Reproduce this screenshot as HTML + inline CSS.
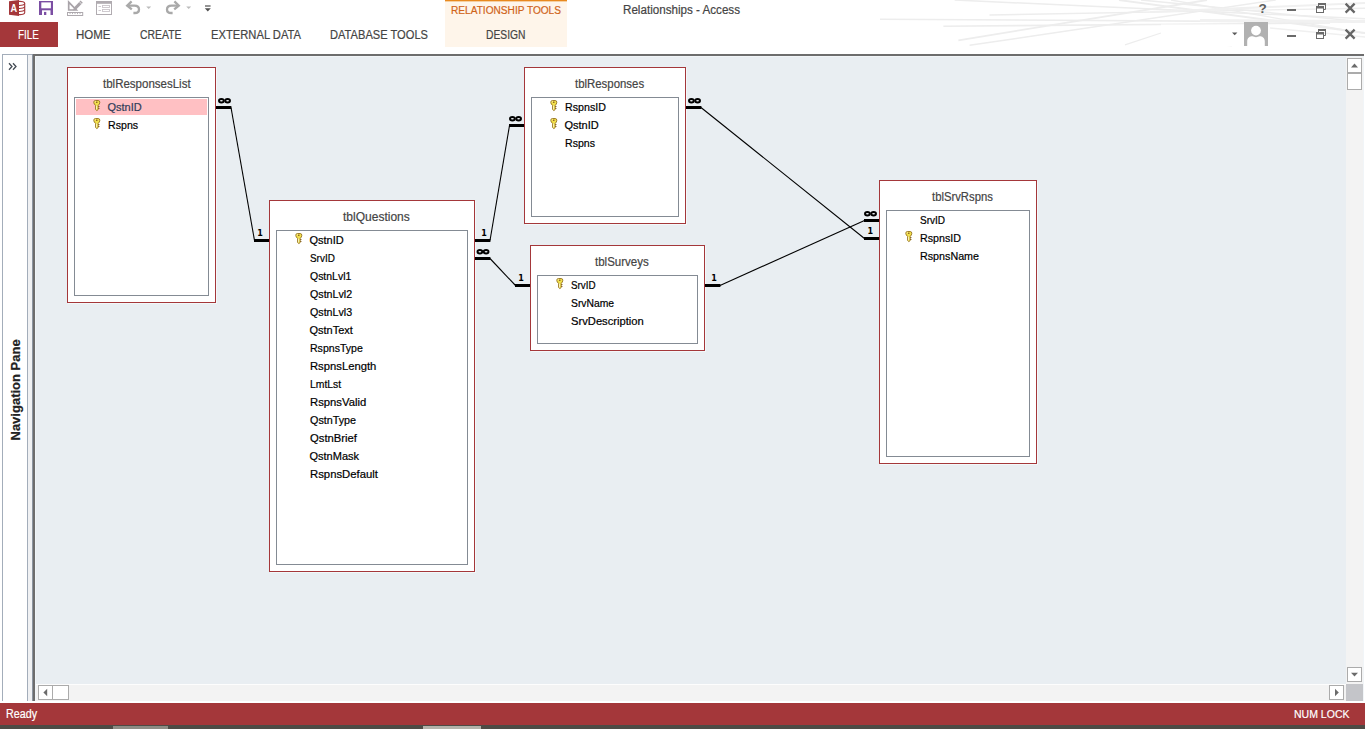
<!DOCTYPE html>
<html lang="en"><head><meta charset="utf-8"><title>Relationships - Access</title>
<style>
html,body{margin:0;padding:0}
body{width:1365px;height:729px;position:relative;overflow:hidden;background:#fff;font-family:'Liberation Sans',sans-serif}
div,span,svg{position:absolute;box-sizing:content-box}
.t{white-space:pre;line-height:20px;height:20px;transform-origin:0 50%;-webkit-text-stroke:.2px currentColor}
.tb{background:#fff;border:1px solid #a4373a;box-shadow:1px 1px 0 #f3f8fa}
.in{background:#fff;border:1px solid #848b94}
.sel{background:#ffc0c3}
.k{overflow:visible}
.sb{background:#fff;border:1px solid #ababab}
</style></head><body>
<!-- title bar / ribbon -->
<div style="left:445px;top:0;width:122px;height:47px;background:#fef5ea"></div>
<div style="left:445px;top:0;width:122px;height:1px;background:#e8891f"></div>
<div style="left:445px;top:1px;width:122px;height:1px;background:#f6cfa0"></div>
<svg class="abs" style="left:0;top:0" width="1365" height="54" viewBox="0 0 1365 54" fill="none">
<g stroke="#ededed">
<line x1="880" y1="19.200" x2="1365" y2="22.200" stroke-width="1.600"/>
<line x1="943.400" y1="26.200" x2="1330" y2="23" stroke-width="1.600"/>
<line x1="989.500" y1="15" x2="1365" y2="8.200" stroke-width="1.400"/>
<line x1="958.400" y1="40.300" x2="1207" y2="0" stroke-width="1.800"/>
<line x1="969.600" y1="45.300" x2="1275.700" y2="0" stroke-width="1.500"/>
<line x1="954.600" y1="0" x2="1365" y2="18.700" stroke-width="1.500"/>
<line x1="1125" y1="44.800" x2="1161" y2="33" stroke-width="1.300"/>
<line x1="1119" y1="0" x2="1365" y2="33" stroke-width="1.800"/>
<line x1="1141" y1="0" x2="1365" y2="22" stroke-width="1.500"/>
<line x1="1171" y1="0" x2="1365" y2="33.400" stroke-width="1.300"/>
<line x1="1150" y1="12" x2="1365" y2="3" stroke-width="2.200" stroke="#f0f0f0"/>
<line x1="1200" y1="20.500" x2="1365" y2="21.500" stroke-width="3" stroke="#f1f1f1"/>
<line x1="1197" y1="41" x2="1232" y2="46" stroke-width="1.300"/>
<line x1="1270" y1="28" x2="1365" y2="37" stroke-width="1.300" stroke="#f0f0f0"/>
</g>
<rect x="1161" y="24.500" width="83" height="22" fill="#fff"/>
</svg>
<div style="left:0;top:22px;width:58px;height:25px;background:#a4373a"></div>
<svg class="abs" style="left:0;top:0" width="230" height="18" viewBox="0 0 230 18">
<!-- access logo -->
<g fill="none" stroke="#a4373a" stroke-width="1.100">
<path d="M18.5 1.400 C22 1.100 24.700 1.900 24.700 3.300 V12.700 C24.700 14.100 22 14.900 18.5 14.600" fill="#fff"/>
<path d="M18.5 5.400 C22 5.600 24.700 4.700 24.700 3.400 M18.5 8.400 C22 8.600 24.700 7.700 24.700 6.400 M18.5 11.400 C22 11.600 24.700 10.700 24.700 9.400"/>
</g>
<path d="M9 1.200 L19 0 L19 15.900 L9 14.700 Z" fill="#a4373a"/>
<text x="13.9" y="12.100" text-anchor="middle" font-family="Liberation Sans,sans-serif" font-weight="700" font-size="11.5" fill="#fff" transform="translate(13.9 0) scale(.8 1) translate(-13.9 0)">A</text>
<!-- save -->
<path d="M39 1 H53 V15 H39 Z" fill="#7b4ea3"/>
<rect x="41.3" y="2.4" width="9.6" height="5.9" fill="#fff"/>
<rect x="42" y="10.3" width="8.5" height="4.7" fill="#fff"/>
<rect x="44" y="11.9" width="2.3" height="3.1" fill="#7b4ea3"/>
<!-- design view -->
<g fill="none" stroke="#a9a4a9" stroke-width="1.7" stroke-linejoin="miter">
<path d="M68.7 2.2 L68.7 10 L76.3 10 Z"/>
</g>
<rect x="67.5" y="12.5" width="15.2" height="3" fill="#fff" stroke="#aea9ae" stroke-width="1"/>
<path d="M73.2 10.4 L74 7.4 L80.6 .6 L82.8 2.8 L76.2 9.6 Z" fill="#a9a4a9"/>
<path d="M79.4 1.8 L81.6 4" stroke="#fff" stroke-width=".7"/>
<g stroke="#aea9ae" stroke-width=".9"><path d="M70 12.6v1.5M72.5 12.6v1.5M75 12.6v1.5M77.500 12.6v1.5M80 12.6v1.5"/></g>
<!-- form -->
<rect x="96.5" y="1.5" width="15" height="13" fill="#fff" stroke="#b0abb0"/>
<rect x="96" y="1" width="16" height="2.800" fill="#b0abb0"/>
<g fill="none" stroke="#cbc5cb" stroke-width=".9"><rect x="102.5" y="5.500" width="7" height="2"/><rect x="102.5" y="9.500" width="7" height="2"/><path d="M98.5 6.500h2.500M98.5 10.500h2.500"/></g>
<!-- undo / redo -->
<g fill="none" stroke="#a9a9a9" stroke-width="2.300" stroke-linecap="butt" stroke-linejoin="miter">
<path d="M131.6 1.400 L127.2 5.600 L131.800 9.400"/><path d="M128 5.600 H134.400 C137.800 5.600 139 7.700 139 9.400 C139 11.500 137.400 13 134.800 13 H133.400"/>
<path d="M174.400 1.400 L178.800 5.600 L174.200 9.400"/><path d="M178 5.600 H171.600 C168.200 5.600 167 7.700 167 9.400 C167 11.500 168.600 13 171.200 13 H172.600"/>
</g>
<path d="M146.200 6.400h5l-2.500 2.600z M186.200 6.400h5l-2.500 2.600z" fill="#bcbcbc"/>
<!-- qat customize -->
<rect x="205" y="5.400" width="5.600" height="1.200" fill="#505050"/>
<path d="M204.800 8.200h6l-3 3.300z" fill="#505050"/>
</svg>
<svg class="abs" style="left:1225px;top:0" width="140" height="50" viewBox="0 0 140 50">
<text x="37.5" y="13" text-anchor="middle" font-family="Liberation Sans,sans-serif" font-weight="700" font-size="13.5" fill="#5c5c5c">?</text>
<g fill="#6a6a6a"><rect x="62" y="9" width="9" height="2"/><rect x="62" y="35" width="9" height="2"/></g>
<g fill="none" stroke="#6a6a6a" stroke-width="1">
<path d="M93.5 6 V3.500 H100.5 V9.5 H98.5"/><path d="M93 4h8" stroke-width="2"/>
<rect x="91.5" y="6.500" width="7" height="6" fill="#fff"/><path d="M91 7.5h8" stroke-width="2"/>
<path d="M93.5 32 V29.5 H100.5 V35.5 H98.5"/><path d="M93 30h8" stroke-width="2"/>
<rect x="91.5" y="32.5" width="7" height="6" fill="#fff"/><path d="M91 33.5h8" stroke-width="2"/>
</g>
<g stroke="#666" stroke-width="2.3" stroke-linecap="butt"><path d="M120.6 3.600 L129.6 12.6 M129.6 3.600 L120.6 12.6 M120.6 29.6 L129.6 38.6 M129.6 29.6 L120.6 38.6"/></g>
<path d="M7 32.400h5.400l-2.700 2.900z" fill="#5a5a5a"/>
<rect x="19" y="22" width="24" height="24" fill="#b1b1b1"/>
<circle cx="31" cy="30.600" r="4.900" fill="#fff"/>
<path d="M22.200 46 V41.500 C22.200 37.600 25 36.300 27.500 36.300 C29.500 37.400 32.500 37.400 34.500 36.300 C37 36.300 39.800 37.600 39.800 41.500 V46 Z" fill="#fff"/>
</svg>
<!-- workspace -->
<div style="left:33px;top:54px;width:1331px;height:647px;background:#6d6d6d"></div>
<div style="left:35px;top:56px;width:1329px;height:645px;background:#f1f5f8"></div>
<div style="left:36px;top:57px;width:1310px;height:627px;background:#e9eef2"></div>
<!-- nav pane -->
<div style="left:2px;top:54px;width:24px;height:647px;background:#fff;border:1px solid #a3adba;border-bottom:none"></div>
<div style="left:28px;top:54px;width:4px;height:647px;background:#f0f1f3;border-top:1px solid #a3adba"></div>
<div style="left:32px;top:54px;width:1px;height:647px;background:#8c95a1"></div>
<svg style="left:8px;top:62px" width="10" height="9" viewBox="0 0 10 9" fill="none" stroke="#444b55" stroke-width="1.3"><path d="M1 1.2 L4 4.5 L1 7.8 M5 1.2 L8 4.5 L5 7.8"/></svg>
<span class="t" style="left:-35.5px;top:379.5px;width:101px;text-align:center;font-size:13px;font-weight:700;color:#222;transform:rotate(-90deg);transform-origin:50% 50%">Navigation Pane</span>
<!-- scrollbars -->
<div style="left:1346px;top:57px;width:17px;height:627px;background:#f3f3f3"></div>
<div style="left:36px;top:684px;width:1310px;height:1px;background:#fdfdfd"></div>
<div style="left:36px;top:685px;width:1310px;height:16px;background:#f3f3f3"></div>
<div style="left:1346px;top:684px;width:17px;height:17px;background:#c4c5c9"></div>
<div class="sb" style="left:1347px;top:58px;width:13px;height:13px"></div>
<div class="sb" style="left:1347px;top:73px;width:13px;height:15px"></div>
<div class="sb" style="left:1347px;top:667px;width:13px;height:13px"></div>
<div class="sb" style="left:38px;top:685px;width:13px;height:13px"></div>
<div class="sb" style="left:52px;top:685px;width:15px;height:13px"></div>
<div class="sb" style="left:1329px;top:685px;width:13px;height:13px"></div>
<svg style="left:1347px;top:58px" width="16" height="16" viewBox="0 0 16 16"><path d="M4 9.4h7L7.5 5.4z" fill="#6b6b6b"/></svg>
<svg style="left:1347px;top:667px" width="16" height="16" viewBox="0 0 16 16"><path d="M4 5.8h7L7.5 9.6z" fill="#6b6b6b"/></svg>
<svg style="left:38px;top:685px" width="16" height="16" viewBox="0 0 16 16"><path d="M9.2 3.8v7.4L5.4 7.5z" fill="#6b6b6b"/></svg>
<svg style="left:1329px;top:685px" width="16" height="16" viewBox="0 0 16 16"><path d="M6 3.8v7.4L9.8 7.5z" fill="#6b6b6b"/></svg>
<!-- tables -->
<div class="tb" style="left:67px;top:67px;width:147px;height:234px"></div><div class="in" style="left:74px;top:97px;width:133px;height:197px"></div><div class="sel" style="left:76px;top:99px;width:131px;height:16px"></div><svg class="k" style="left:92.5px;top:100px" width="8" height="12" viewBox="0 0 8 12"><path d="M.8 2.3 Q.8 .5 2.4 .5 L5.2 .5 Q6.8 .5 6.8 2.3 Q6.8 4.1 5.2 5.4 L5.2 9.5 L3.9 10.6 L2.6 9.5 L2.6 5.4 Q.8 4.1 .8 2.3 Z" fill="#f1e04a" stroke="#94701e" stroke-width=".9" stroke-linejoin="round"/><path d="M5.3 6.1h1.1v1h-1.1z M5.3 7.9h1.1v1h-1.1z" fill="#7a5216"/><circle cx="3.8" cy="2.3" r=".8" fill="#7a4a22"/><path d="M1.7 1.9 L2.5 1.4 M3.6 5.6 L3.6 9.4" stroke="#fffde0" stroke-width=".8"/></svg><svg class="k" style="left:92.5px;top:118px" width="8" height="12" viewBox="0 0 8 12"><path d="M.8 2.3 Q.8 .5 2.4 .5 L5.2 .5 Q6.8 .5 6.8 2.3 Q6.8 4.1 5.2 5.4 L5.2 9.5 L3.9 10.6 L2.6 9.5 L2.6 5.4 Q.8 4.1 .8 2.3 Z" fill="#f1e04a" stroke="#94701e" stroke-width=".9" stroke-linejoin="round"/><path d="M5.3 6.1h1.1v1h-1.1z M5.3 7.9h1.1v1h-1.1z" fill="#7a5216"/><circle cx="3.8" cy="2.3" r=".8" fill="#7a4a22"/><path d="M1.7 1.9 L2.5 1.4 M3.6 5.6 L3.6 9.4" stroke="#fffde0" stroke-width=".8"/></svg><div class="tb" style="left:269px;top:200px;width:204px;height:370px"></div><div class="in" style="left:276px;top:230px;width:190px;height:333px"></div><svg class="k" style="left:294.5px;top:233px" width="8" height="12" viewBox="0 0 8 12"><path d="M.8 2.3 Q.8 .5 2.4 .5 L5.2 .5 Q6.8 .5 6.8 2.3 Q6.8 4.1 5.2 5.4 L5.2 9.5 L3.9 10.6 L2.6 9.5 L2.6 5.4 Q.8 4.1 .8 2.3 Z" fill="#f1e04a" stroke="#94701e" stroke-width=".9" stroke-linejoin="round"/><path d="M5.3 6.1h1.1v1h-1.1z M5.3 7.9h1.1v1h-1.1z" fill="#7a5216"/><circle cx="3.8" cy="2.3" r=".8" fill="#7a4a22"/><path d="M1.7 1.9 L2.5 1.4 M3.6 5.6 L3.6 9.4" stroke="#fffde0" stroke-width=".8"/></svg><div class="tb" style="left:524px;top:67px;width:160px;height:155px"></div><div class="in" style="left:531px;top:97px;width:146px;height:118px"></div><svg class="k" style="left:549.5px;top:100px" width="8" height="12" viewBox="0 0 8 12"><path d="M.8 2.3 Q.8 .5 2.4 .5 L5.2 .5 Q6.8 .5 6.8 2.3 Q6.8 4.1 5.2 5.4 L5.2 9.5 L3.9 10.6 L2.6 9.5 L2.6 5.4 Q.8 4.1 .8 2.3 Z" fill="#f1e04a" stroke="#94701e" stroke-width=".9" stroke-linejoin="round"/><path d="M5.3 6.1h1.1v1h-1.1z M5.3 7.9h1.1v1h-1.1z" fill="#7a5216"/><circle cx="3.8" cy="2.3" r=".8" fill="#7a4a22"/><path d="M1.7 1.9 L2.5 1.4 M3.6 5.6 L3.6 9.4" stroke="#fffde0" stroke-width=".8"/></svg><svg class="k" style="left:549.5px;top:118px" width="8" height="12" viewBox="0 0 8 12"><path d="M.8 2.3 Q.8 .5 2.4 .5 L5.2 .5 Q6.8 .5 6.8 2.3 Q6.8 4.1 5.2 5.4 L5.2 9.5 L3.9 10.6 L2.6 9.5 L2.6 5.4 Q.8 4.1 .8 2.3 Z" fill="#f1e04a" stroke="#94701e" stroke-width=".9" stroke-linejoin="round"/><path d="M5.3 6.1h1.1v1h-1.1z M5.3 7.9h1.1v1h-1.1z" fill="#7a5216"/><circle cx="3.8" cy="2.3" r=".8" fill="#7a4a22"/><path d="M1.7 1.9 L2.5 1.4 M3.6 5.6 L3.6 9.4" stroke="#fffde0" stroke-width=".8"/></svg><div class="tb" style="left:530px;top:245px;width:173px;height:104px"></div><div class="in" style="left:537px;top:275px;width:159px;height:67px"></div><svg class="k" style="left:555.5px;top:278px" width="8" height="12" viewBox="0 0 8 12"><path d="M.8 2.3 Q.8 .5 2.4 .5 L5.2 .5 Q6.8 .5 6.8 2.3 Q6.8 4.1 5.2 5.4 L5.2 9.5 L3.9 10.6 L2.6 9.5 L2.6 5.4 Q.8 4.1 .8 2.3 Z" fill="#f1e04a" stroke="#94701e" stroke-width=".9" stroke-linejoin="round"/><path d="M5.3 6.1h1.1v1h-1.1z M5.3 7.9h1.1v1h-1.1z" fill="#7a5216"/><circle cx="3.8" cy="2.3" r=".8" fill="#7a4a22"/><path d="M1.7 1.9 L2.5 1.4 M3.6 5.6 L3.6 9.4" stroke="#fffde0" stroke-width=".8"/></svg><div class="tb" style="left:879px;top:180px;width:156px;height:282px"></div><div class="in" style="left:886px;top:210px;width:142px;height:245px"></div><svg class="k" style="left:904.5px;top:231px" width="8" height="12" viewBox="0 0 8 12"><path d="M.8 2.3 Q.8 .5 2.4 .5 L5.2 .5 Q6.8 .5 6.8 2.3 Q6.8 4.1 5.2 5.4 L5.2 9.5 L3.9 10.6 L2.6 9.5 L2.6 5.4 Q.8 4.1 .8 2.3 Z" fill="#f1e04a" stroke="#94701e" stroke-width=".9" stroke-linejoin="round"/><path d="M5.3 6.1h1.1v1h-1.1z M5.3 7.9h1.1v1h-1.1z" fill="#7a5216"/><circle cx="3.8" cy="2.3" r=".8" fill="#7a4a22"/><path d="M1.7 1.9 L2.5 1.4 M3.6 5.6 L3.6 9.4" stroke="#fffde0" stroke-width=".8"/></svg>
<svg class="abs" style="left:0;top:0" width="1365" height="729" viewBox="0 0 1365 729"><rect x="216" y="106" width="15.4" height="3"/><rect x="254" y="239" width="15" height="3"/><rect x="475" y="239" width="15.4" height="3"/><rect x="509" y="124" width="15" height="3"/><rect x="475" y="257" width="15.4" height="3"/><rect x="515" y="284" width="15" height="3"/><rect x="705" y="284" width="15.4" height="3"/><rect x="864" y="219" width="15" height="3"/><rect x="686" y="106" width="15.4" height="3"/><rect x="864" y="237" width="15" height="3"/><line x1="231" y1="107.5" x2="254.5" y2="240.5" stroke="#000" stroke-width="1.1"/><line x1="490" y1="240.5" x2="509.5" y2="125.5" stroke="#000" stroke-width="1.1"/><line x1="490" y1="258.5" x2="515.5" y2="285.5" stroke="#000" stroke-width="1.1"/><line x1="720" y1="285.5" x2="864.5" y2="220.5" stroke="#000" stroke-width="1.1"/><line x1="701" y1="107.5" x2="864.5" y2="238.5" stroke="#000" stroke-width="1.1"/><g fill="none" stroke="#000" stroke-width="1.9"><ellipse cx="221.4" cy="100.7" rx="2.4" ry="1.75"/><ellipse cx="227.6" cy="100.7" rx="2.4" ry="1.75"/></g><g fill="none" stroke="#000" stroke-width="1.9"><ellipse cx="512.4" cy="118.7" rx="2.4" ry="1.75"/><ellipse cx="518.6" cy="118.7" rx="2.4" ry="1.75"/></g><g fill="none" stroke="#000" stroke-width="1.9"><ellipse cx="479.9" cy="251.7" rx="2.4" ry="1.75"/><ellipse cx="486.1" cy="251.7" rx="2.4" ry="1.75"/></g><g fill="none" stroke="#000" stroke-width="1.9"><ellipse cx="867.4" cy="213.7" rx="2.4" ry="1.75"/><ellipse cx="873.6" cy="213.7" rx="2.4" ry="1.75"/></g><g fill="none" stroke="#000" stroke-width="1.9"><ellipse cx="691.4" cy="100.7" rx="2.4" ry="1.75"/><ellipse cx="697.6" cy="100.7" rx="2.4" ry="1.75"/></g><text x="260" y="236" text-anchor="middle" font-family="DejaVu Sans,sans-serif" font-weight="700" font-size="8">1</text><text x="484" y="236" text-anchor="middle" font-family="DejaVu Sans,sans-serif" font-weight="700" font-size="8">1</text><text x="521" y="281.3" text-anchor="middle" font-family="DejaVu Sans,sans-serif" font-weight="700" font-size="8">1</text><text x="714" y="281.3" text-anchor="middle" font-family="DejaVu Sans,sans-serif" font-weight="700" font-size="8">1</text><text x="870.3" y="234" text-anchor="middle" font-family="DejaVu Sans,sans-serif" font-weight="700" font-size="8">1</text></svg>
<!-- status bar -->
<div style="left:0;top:701px;width:1365px;height:2px;background:#fff"></div>
<div style="left:0;top:703px;width:1365px;height:22px;background:#a4373a"></div>
<div style="left:0;top:725px;width:1365px;height:4px;background:#4e4b45"></div>
<div style="left:113px;top:726px;width:55px;height:3px;background:#8e8c84"></div>
<div style="left:423px;top:726px;width:58px;height:3px;background:#b4b2aa"></div>
<!-- texts -->
<span class="t" style="left:18.0px;top:25px;font-size:12.5px;color:#fff;transform:scaleX(0.7953);">FILE</span><span class="t" style="left:75.5px;top:25px;font-size:12.5px;color:#444;transform:scaleX(0.9200);">HOME</span><span class="t" style="left:139.5px;top:25px;font-size:12.5px;color:#444;transform:scaleX(0.8336);">CREATE</span><span class="t" style="left:210.5px;top:25px;font-size:12.5px;color:#444;transform:scaleX(0.8957);">EXTERNAL DATA</span><span class="t" style="left:330.0px;top:25px;font-size:12.5px;color:#444;transform:scaleX(0.8890);">DATABASE TOOLS</span><span class="t" style="left:451.0px;top:0px;font-size:11.7px;color:#d0641a;transform:scaleX(0.8655);">RELATIONSHIP TOOLS</span><span class="t" style="left:485.5px;top:25px;font-size:12.5px;color:#444;transform:scaleX(0.8240);">DESIGN</span><span class="t" style="left:623.0px;top:0px;font-size:12.5px;color:#444;transform:scaleX(0.9303);">Relationships - Access</span><span class="t" style="left:6.0px;top:704px;font-size:12.3px;color:#fff;transform:scaleX(0.8721);">Ready</span><span class="t" style="left:1293.5px;top:704px;font-size:11.8px;color:#fff;transform:scaleX(0.8911);">NUM LOCK</span><span class="t" style="left:103.0px;top:74px;font-size:12.5px;color:#444;transform:scaleX(0.9201);">tblResponsesList</span><span class="t" style="left:107.5px;top:97px;font-size:11px;color:#2f3d58;">QstnID</span><span class="t" style="left:107.5px;top:115px;font-size:11px;color:#000;transform:scaleX(0.9651);">Rspns</span><span class="t" style="left:343.0px;top:207px;font-size:12.5px;color:#444;transform:scaleX(0.9614);">tblQuestions</span><span class="t" style="left:309.5px;top:230px;font-size:11px;color:#000;">QstnID</span><span class="t" style="left:309.5px;top:248px;font-size:11px;color:#000;transform:scaleX(0.9018);">SrvID</span><span class="t" style="left:309.5px;top:266px;font-size:11px;color:#000;transform:scaleX(0.9511);">QstnLvl1</span><span class="t" style="left:309.5px;top:284px;font-size:11px;color:#000;transform:scaleX(0.9696);">QstnLvl2</span><span class="t" style="left:309.5px;top:302px;font-size:11px;color:#000;transform:scaleX(0.9696);">QstnLvl3</span><span class="t" style="left:309.5px;top:320px;font-size:11px;color:#000;">QstnText</span><span class="t" style="left:309.5px;top:338px;font-size:11px;color:#000;transform:scaleX(0.9595);">RspnsType</span><span class="t" style="left:309.5px;top:356px;font-size:11px;color:#000;transform:scaleX(1.0227);">RspnsLength</span><span class="t" style="left:309.5px;top:374px;font-size:11px;color:#000;transform:scaleX(0.9450);">LmtLst</span><span class="t" style="left:309.5px;top:392px;font-size:11px;color:#000;transform:scaleX(1.0250);">RspnsValid</span><span class="t" style="left:309.5px;top:410px;font-size:11px;color:#000;transform:scaleX(0.9792);">QstnType</span><span class="t" style="left:309.5px;top:428px;font-size:11px;color:#000;transform:scaleX(1.0249);">QstnBrief</span><span class="t" style="left:309.5px;top:446px;font-size:11px;color:#000;">QstnMask</span><span class="t" style="left:309.5px;top:464px;font-size:11px;color:#000;transform:scaleX(1.0296);">RspnsDefault</span><span class="t" style="left:575.2px;top:74px;font-size:12.5px;color:#444;transform:scaleX(0.9122);">tblResponses</span><span class="t" style="left:564.5px;top:97px;font-size:11px;color:#000;transform:scaleX(0.9695);">RspnsID</span><span class="t" style="left:564.5px;top:115px;font-size:11px;color:#000;">QstnID</span><span class="t" style="left:564.5px;top:133px;font-size:11px;color:#000;transform:scaleX(0.9619);">Rspns</span><span class="t" style="left:595.1px;top:252px;font-size:12.5px;color:#444;transform:scaleX(0.9219);">tblSurveys</span><span class="t" style="left:570.5px;top:275px;font-size:11px;color:#000;transform:scaleX(0.8945);">SrvID</span><span class="t" style="left:570.5px;top:293px;font-size:11px;color:#000;transform:scaleX(0.9401);">SrvName</span><span class="t" style="left:570.5px;top:311px;font-size:11px;color:#000;transform:scaleX(1.0177);">SrvDescription</span><span class="t" style="left:932.3px;top:187px;font-size:12.5px;color:#444;transform:scaleX(0.9037);">tblSrvRspns</span><span class="t" style="left:919.5px;top:210px;font-size:11px;color:#000;transform:scaleX(0.9127);">SrvID</span><span class="t" style="left:919.5px;top:228px;font-size:11px;color:#000;transform:scaleX(0.9695);">RspnsID</span><span class="t" style="left:919.5px;top:246px;font-size:11px;color:#000;transform:scaleX(0.9747);">RspnsName</span>
</body></html>
